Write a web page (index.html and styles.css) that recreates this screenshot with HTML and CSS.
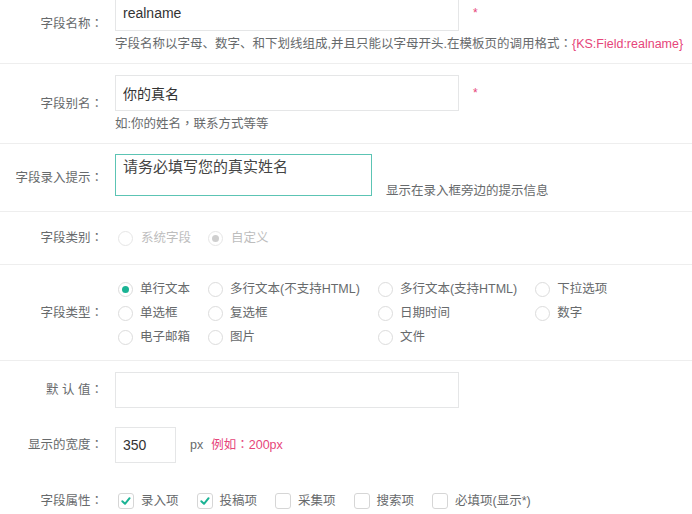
FILE: index.html
```html
<!DOCTYPE html>
<html lang="zh-CN">
<head>
<meta charset="utf-8">
<title>字段设置</title>
<link rel="stylesheet" href="styles.css">
</head>
<body>
<div class="form">
  <div class="row r-name line">
    <div class="lbl">字段名称<span class="p">：</span></div>
    <div class="field">
      <div class="inrow"><input class="inp wide" value="realname"><span class="req">*</span></div>
      <div class="help">字段名称以字母、数字、和下划线组成,并且只能以字母开头.在模板页的调用格式<span class="p">：</span><span class="pink">{KS:Field:realname}</span></div>
    </div>
  </div>
  <div class="row r-name line">
    <div class="lbl">字段别名<span class="p">：</span></div>
    <div class="field">
      <div class="inrow"><input class="inp wide" value="你的真名"><span class="req">*</span></div>
      <div class="help">如:你的姓名<span class="p">，</span>联系方式等等</div>
    </div>
  </div>
  <div class="row line">
    <div class="lbl">字段录入提示<span class="p">：</span></div>
    <div class="field tiprow">
      <textarea class="ta">请务必填写您的真实姓名</textarea>
      <span class="hint">显示在录入框旁边的提示信息</span>
    </div>
  </div>
  <div class="row r-cat line">
    <div class="lbl">字段类别<span class="p">：</span></div>
    <div class="field opts">
      <span class="opt dis"><span class="radio"></span>系统字段</span>
      <span class="opt dis"><span class="radio on"></span>自定义</span>
    </div>
  </div>
  <div class="row r-type line">
    <div class="lbl">字段类型<span class="p">：</span></div>
    <div class="field grid">
      <span class="opt"><span class="radio on"></span>单行文本</span>
      <span class="opt"><span class="radio"></span>多行文本(不支持HTML)</span>
      <span class="opt"><span class="radio"></span>多行文本(支持HTML)</span>
      <span class="opt"><span class="radio"></span>下拉选项</span>
      <span class="opt"><span class="radio"></span>单选框</span>
      <span class="opt"><span class="radio"></span>复选框</span>
      <span class="opt"><span class="radio"></span>日期时间</span>
      <span class="opt"><span class="radio"></span>数字</span>
      <span class="opt"><span class="radio"></span>电子邮箱</span>
      <span class="opt"><span class="radio"></span>图片</span>
      <span class="opt"><span class="radio"></span>文件</span>
    </div>
  </div>
  <div class="row r-def">
    <div class="lbl">默&nbsp;认&nbsp;值<span class="p">：</span></div>
    <div class="field"><input class="inp wide" value=""></div>
  </div>
  <div class="row r-width">
    <div class="lbl">显示的宽度<span class="p">：</span></div>
    <div class="field inrow">
      <input class="inp narrow" value="350">
      <span class="unit">px</span><span class="pink ex">例如<span class="p">：</span>200px</span>
    </div>
  </div>
  <div class="row r-attr">
    <div class="lbl">字段属性<span class="p">：</span></div>
    <div class="field opts">
      <span class="opt ck"><span class="box on"><svg viewBox="0 0 16 16" width="16" height="16"><path d="M4.3 8.2 L7 10.8 L11.6 5.2" fill="none" stroke="#1ab394" stroke-width="2" stroke-linecap="round" stroke-linejoin="round"/></svg></span>录入项</span>
      <span class="opt ck"><span class="box on"><svg viewBox="0 0 16 16" width="16" height="16"><path d="M4.3 8.2 L7 10.8 L11.6 5.2" fill="none" stroke="#1ab394" stroke-width="2" stroke-linecap="round" stroke-linejoin="round"/></svg></span>投稿项</span>
      <span class="opt ck"><span class="box"></span>采集项</span>
      <span class="opt ck"><span class="box"></span>搜索项</span>
      <span class="opt ck"><span class="box"></span>必填项(显示*)</span>
    </div>
  </div>
</div>
</body>
</html>
```
FILE: styles.css
```css
html, body {
  margin: 0;
  padding: 0;
  background: #fff;
}
body {
  font-family: "Liberation Sans", "Noto Sans CJK SC", sans-serif;
  font-size: 12.5px;
  color: #676a6c;
  overflow: hidden;
}
.form {
  margin-top: -16px;
}
.row {
  display: flex;
  align-items: center;
}
.line {
  border-bottom: 1px solid #eeeeee;
}
.lbl {
  width: 103px;
  margin-right: 12px;
  flex-shrink: 0;
  text-align: right;
  line-height: 18px;
  white-space: nowrap;
}
.p {
  font-family: "Noto Sans CJK TC", sans-serif;
  font-feature-settings: "locl" 0;
  line-height: 0;
}
.field {
  flex: 1;
  min-width: 0;
}
.inrow {
  display: flex;
  align-items: center;
}
.inp {
  box-sizing: border-box;
  height: 36px;
  border: 1px solid #e5e6e7;
  border-radius: 0;
  padding: 0 7px;
  margin: 0;
  font-family: "Liberation Sans", "Noto Sans CJK SC", sans-serif;
  font-size: 14px;
  color: #333;
  outline: none;
  background: #fff;
}
.wide { width: 344px; }
.narrow { width: 61px; }
.req {
  color: #e6457a;
  margin-left: 14px;
  font-size: 12px;
  line-height: 18px;
}
.help {
  margin-top: 4px;
  line-height: 18px;
  white-space: nowrap;
}
.pink { color: #e6457a; }
.r-name { padding: 11px 0 10px; }
.tiprow {
  display: flex;
  align-items: flex-end;
  padding: 10px 0 15px;
}
.ta {
  box-sizing: border-box;
  width: 257px;
  height: 42px;
  margin: 0;
  padding: 2px 7px;
  border: 1px solid #5cc4b4;
  resize: none;
  outline: none;
  font-family: "Liberation Sans", "Noto Sans CJK SC", sans-serif;
  font-size: 15px;
  line-height: 20px;
  color: #444;
  overflow: hidden;
}
.hint {
  margin-left: 14px;
  line-height: 18px;
  margin-bottom: -4px;
  white-space: nowrap;
}
.r-cat { padding: 17px 0; }
.opts {
  display: flex;
  align-items: center;
}
.opt {
  display: inline-flex;
  align-items: center;
  line-height: 18px;
  white-space: nowrap;
  color: #676a6c;
}
.opts .opt { margin-right: 14px; }
.opt.dis { color: #bdbdbd; }
.radio {
  box-sizing: border-box;
  width: 15px;
  height: 15px;
  border: 1px solid #dcdcdc;
  border-radius: 50%;
  margin: 0 8px 0 3px;
  display: inline-flex;
  align-items: center;
  justify-content: center;
  background: #fff;
  flex-shrink: 0;
}
.radio.on::after {
  content: "";
  width: 7px;
  height: 7px;
  border-radius: 50%;
  background: #1ab394;
}
.dis .radio { border-color: #e6e6e6; }
.dis .radio.on::after { background: #cfcfcf; }
.r-type { padding: 12px 0 11px; }
.grid {
  display: grid;
  grid-template-columns: auto auto auto auto;
  justify-content: start;
  column-gap: 15px;
  grid-auto-rows: 24px;
}
.grid .radio { margin-right: 7px; }
.r-def { padding: 11px 0 9px; }
.r-width { padding: 10px 0 10px; }
.unit {
  margin-left: 14px;
  line-height: 18px;
}
.ex {
  margin-left: 8px;
  line-height: 18px;
}
.r-attr { padding: 19px 0 20px; }
.opts .opt.ck { margin-right: 15px; }
.box {
  box-sizing: border-box;
  width: 16px;
  height: 16px;
  border: 1px solid #d6d6d6;
  border-radius: 3px;
  margin: 0 7px 0 3px;
  display: inline-block;
  position: relative;
  flex-shrink: 0;
  background: #fff;
}
.box svg {
  position: absolute;
  left: -1px;
  top: -1px;
}
```
